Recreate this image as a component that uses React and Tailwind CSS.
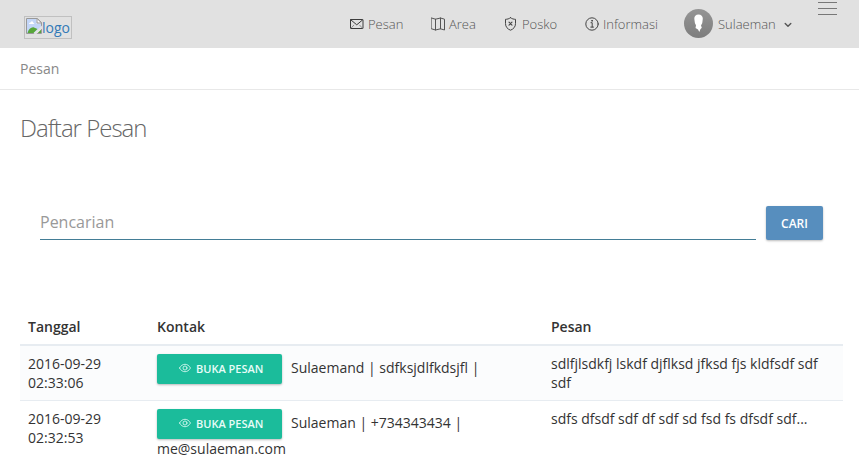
import React from 'react';

const line = { fill: 'none', stroke: 'currentColor', strokeWidth: 1, strokeLinecap: 'round', strokeLinejoin: 'round' };

function MailIcon() {
  return (
    <svg className="h-[14px] w-[14px] text-[#3c3c3c]" viewBox="0 0 14 14" {...line}>
      <rect x="0.5" y="2.500" width="12.500" height="9" rx="0.400" />
      <path d="M1 3 6.750 7.800 12.500 3" />
      <path d="M1.200 11 3.800 8.200M12.300 11 9.700 8.200" strokeWidth="0.500" />
    </svg>
  );
}

function MapIcon() {
  return (
    <svg className="h-[14px] w-[14px]" viewBox="0 0 14 14" {...line}>
      <path d="M.5 1 4.500 2.200 9.500 1 13.500 2.200V13L9.500 11.800 4.500 13 .5 11.800ZM4.500 2.200V13M9.500 1V11.800" />
    </svg>
  );
}

function ShieldIcon() {
  return (
    <svg className="h-[14px] w-[14px] text-[#444]" viewBox="0 0 14 14" {...line}>
      <path d="M6.500 .7C5 1.900 3.200 2.300 1.500 2.300V6.600C1.500 9.900 3.600 12.100 6.500 13.200 9.400 12.100 11.500 9.900 11.500 6.600V2.300C9.800 2.300 8 1.900 6.500 .7Z" />
      <path d="M5 5.200 8 8.200M8 5.200 5 8.200" strokeWidth="1.100" />
    </svg>
  );
}

function InfoIcon() {
  return (
    <svg className="h-[14px] w-[14px] text-[#444]" viewBox="0 0 14 14" {...line}>
      <circle cx="7" cy="7" r="6.200" />
      <path d="M6 5.700H7.200V10M5.800 10.100H8.500" />
      <circle cx="7" cy="3.800" r="0.400" fill="currentColor" />
    </svg>
  );
}

function EyeIcon() {
  return (
    <svg className="-mt-[2px] h-[12px] w-[12px]" viewBox="0 0 12 12" {...line} strokeWidth="0.8">
      <path d="M.5 6C2 3.500 3.800 2.300 6 2.300S10 3.500 11.500 6C10 8.500 8.200 9.700 6 9.700S2 8.500.5 6Z" />
      <circle cx="6" cy="6" r="2" />
    </svg>
  );
}

function Avatar() {
  return (
    <svg className="h-[29px] w-[29px]" viewBox="0 0 29 29">
      <defs>
        <linearGradient id="avatar" x1="0" y1="0" x2="0" y2="1">
          <stop offset="0" stopColor="#959595" />
          <stop offset="1" stopColor="#7d7d7d" />
        </linearGradient>
      </defs>
      <circle cx="14.500" cy="14.500" r="14.500" fill="url(#avatar)" />
      <path d="M14.500 5.500C11.800 5.500 10.200 7.200 10.300 9.800L10.900 14C11.100 15 12 15.700 12 16.500L11.500 19 14 20.500 15.300 23 16.400 20.200 17.800 18.800 17 16.500C17.500 15.500 18.200 14.800 18.300 13.800L18.800 9.800C18.900 7.200 17.200 5.500 14.500 5.500Z" fill="#fff" />
    </svg>
  );
}

function Logo() {
  return (
    <a className="ml-6 mt-4 flex h-[23px] w-12 items-start overflow-hidden border border-[#c0c0c0] pl-px pt-px text-sm leading-[19px] text-[#337ab7]">
      <svg className="h-4 w-4 shrink-0" viewBox="0 0 16 16">
        <path d="M.5.500H11.500L15.500 4.500V15.500H.5Z" fill="#fff" stroke="#999" />
        <path d="M1 1H10.500V5.500H15V9L8 15H1Z" fill="#c3d6f8" />
        <path d="M3 6C3 4.500 4.500 4.500 4.700 4.200 5.500 2.600 7.500 3.500 7.300 5 8.500 5 8.500 6 8 6Z" fill="#fff" />
        <path d="M1.500 15C2.500 11 5.500 8.800 8 9.500L11.500 11 7.500 15Z" fill="#57a639" />
        <path d="M15 11.500V15H11.500Z" fill="#57a639" />
        <path d="M16 7.500 7.500 16H10.500L16 10.500Z" fill="#e1e1e1" />
        <path d="M11 .5V5H15.500Z" fill="#fff" stroke="#999" />
      </svg>
      <span>logo</span>
    </a>
  );
}

function NavItem({ icon, label, width }) {
  return (
    <a className={`flex items-center gap-1 ${width}`}>
      {icon}
      <span>{label}</span>
    </a>
  );
}

function Header() {
  return (
    <header className="flex h-12 items-start justify-between bg-[#e1e1e1]">
      <Logo />
      <div className="flex h-12 items-start">
        <nav className="flex h-12 items-center text-[13px] font-light leading-[18px] text-[#555]">
          <NavItem icon={<MailIcon />} label="Pesan" width="w-[81px]" />
          <NavItem icon={<MapIcon />} label="Area" width="w-[73px]" />
          <NavItem icon={<ShieldIcon />} label="Posko" width="w-[81px]" />
          <NavItem icon={<InfoIcon />} label="Informasi" width="w-[99px]" />
          <a className="flex w-[134px] items-center pb-px">
            <Avatar />
            <span className="ml-[5px] pt-px">Sulaeman</span>
            <svg className="ml-[7px] mt-[3px] h-2 w-[10px]" viewBox="0 0 10 8" {...line} strokeWidth="1.400">
              <path d="M2.200 2.500 5 5.300 7.800 2.500" />
            </svg>
          </a>
        </nav>
        <div className="mr-[22px] mt-[2px] flex w-[19px] flex-col gap-[5px]">
          <span className="h-px bg-[#777]" />
          <span className="h-px bg-[#777]" />
          <span className="h-px bg-[#777]" />
        </div>
      </div>
    </header>
  );
}

function OpenButton() {
  return (
    <a className="mr-[5.4px] inline-flex h-[30px] w-[125px] items-center rounded-[2px] bg-[#1bbc9b] pl-[22px] align-middle text-[11px] font-semibold leading-[16px] text-[#e8fcf8] shadow-[0_1px_3px_rgba(0,0,0,0.1),0_1px_2px_rgba(0,0,0,0.18)]">
      <EyeIcon />
      <span className="ml-[5px] pb-px">BUKA PESAN</span>
    </a>
  );
}

const rows = [
  { date: '2016-09-29', time: '02:33:06', contact: 'Sulaemand | sdfksjdlfkdsjfl |', email: '', message: 'sdlfjlsdkfj lskdf djflksd jfksd fjs kldfsdf sdf sdf' },
  { date: '2016-09-29', time: '02:32:53', contact: 'Sulaeman | +734343434 |', email: 'me@sulaeman.com', message: 'sdfs dfsdf sdf df sdf sd fsd fs dfsdf sdf...' },
];

export default function App() {
  return (
    <div className="h-[462px] w-[859px] overflow-hidden bg-white font-['Open_Sans',sans-serif] text-sm leading-[19px] text-[#333]">
      <Header />
      <div className="h-[42px] border-b border-[#e8e8e8] px-5 pt-[11px] text-[#888]">Pesan</div>
      <main className="pl-5 pr-4">
        <h1 className="pt-[21px] text-2xl font-light leading-[33px] tracking-[-1px] text-[#666]">Daftar Pesan</h1>
        <form className="mt-[62px] flex h-[34px] gap-[10px] px-5">
          <div className="flex w-[716px] flex-col">
            <input placeholder="Pencarian" className="h-[33px] w-full pb-px text-base text-[#555] outline-none placeholder:text-[#999]" />
            <div className="h-px bg-[#437d96]" />
          </div>
          <button type="button" className="w-[57px] rounded-[2px] bg-[#578ebe] pt-px text-xs font-semibold text-white shadow-[0_1px_3px_rgba(0,0,0,0.1),0_1px_2px_rgba(0,0,0,0.18)]">CARI</button>
        </form>
        <table className="mt-[69px] w-[823px] table-fixed border-collapse text-left align-top">
          <colgroup>
            <col className="w-[129px]" />
            <col className="w-[394px]" />
            <col className="w-[300px]" />
          </colgroup>
          <thead>
            <tr className="border-b-2 border-[#e7ecf1]">
              <th className="p-2 font-semibold">Tanggal</th>
              <th className="p-2 font-semibold">Kontak</th>
              <th className="p-2 font-semibold">Pesan</th>
            </tr>
          </thead>
          <tbody>
            {rows.map((row) => (
              <tr key={row.time} className="border-b border-[#e7ecf1] align-top odd:bg-[#fbfcfd]">
                <td className="p-2">{row.date}<br />{row.time}</td>
                <td className="p-2">
                  <div className="h-[30px]"><OpenButton /> {row.contact}</div>
                  {row.email && <div>{row.email}</div>}
                </td>
                <td className="p-2">{row.message}</td>
              </tr>
            ))}
          </tbody>
        </table>
      </main>
    </div>
  );
}
